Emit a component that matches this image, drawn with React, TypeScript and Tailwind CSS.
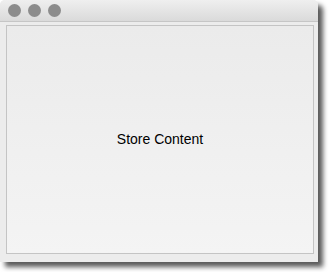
import React from 'react';

const App: React.FC = () => {
  return (
    <div className="w-[330px] h-[272px] bg-white relative overflow-hidden" style={{ fontFamily: '"Liberation Sans", Arial, sans-serif' }}>
      <div className="w-[318px] h-[262px] bg-[#ececec] rounded-t-[5px] flex flex-col shadow-[5px_5px_5px_rgba(0,0,0,0.65)]">
        <div className="h-[22px] shrink-0 rounded-t-[5px] bg-gradient-to-b from-[#efefef] to-[#dadada] border-b border-[#c6c6c6] flex items-center gap-[7px] pl-[8px]">
          <span className="w-[13px] h-[13px] rounded-full bg-[#8c8c8c]" />
          <span className="w-[13px] h-[13px] rounded-full bg-[#8c8c8c]" />
          <span className="w-[13px] h-[13px] rounded-full bg-[#8c8c8c]" />
        </div>
        <div className="flex-1 mt-[3px] ml-[6px] mr-[4px] mb-[8px] border border-[#c4c4c4] bg-gradient-to-b from-[#ebebeb] to-[#f4f4f4] flex items-center justify-center">
          <span className="text-[14px] text-black">Store Content</span>
        </div>
      </div>
    </div>
  );
};

export default App;
